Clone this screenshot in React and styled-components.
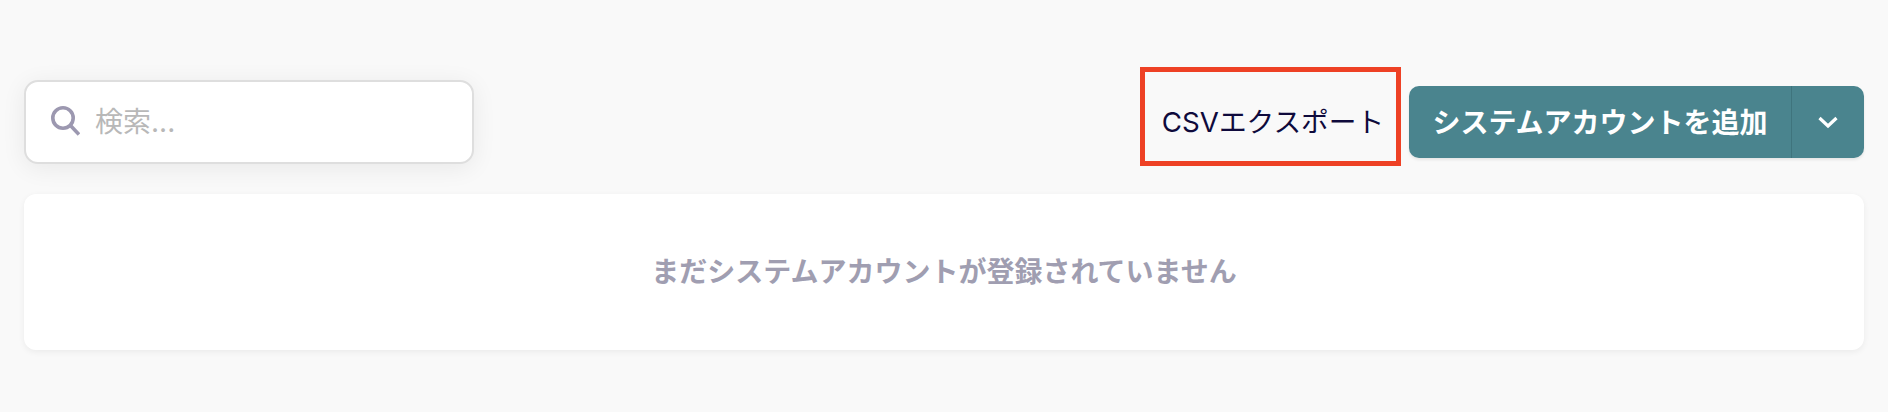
import React from "react";
import styled, { createGlobalStyle } from "styled-components";

const GlobalStyle = createGlobalStyle`
  html, body {
    margin: 0;
    padding: 0;
    background: #f9f9f9;
  }
  body {
    font-family: "Inter", "Noto Sans CJK JP", sans-serif;
  }
`;

const Page = styled.div`
  width: 1888px;
  height: 412px;
  box-sizing: border-box;
  padding: 67px 24px 0;
  background: #f9f9f9;
  overflow: hidden;
`;

const Toolbar = styled.div`
  display: flex;
  align-items: flex-end;
  height: 99px;
`;

const SearchBox = styled.label`
  display: flex;
  align-items: center;
  gap: 15px;
  width: 450px;
  height: 84px;
  margin-bottom: 2px;
  box-sizing: border-box;
  padding: 0 24px;
  background: #fff;
  border: 2px solid #dedede;
  border-radius: 14px;
  box-shadow: 0 4px 24px rgba(0, 0, 0, 0.07);

  svg {
    margin-bottom: 3px;
  }
`;

const SearchInput = styled.input`
  flex: 1;
  min-width: 0;
  border: 0;
  outline: 0;
  padding: 0;
  background: transparent;
  font-family: "Inter", "Noto Sans CJK JP", sans-serif;
  font-size: 28px;
  color: #333;

  &::placeholder {
    color: #b8b8b8;
    opacity: 1;
  }
`;

const Actions = styled.div`
  display: flex;
  align-items: flex-end;
  gap: 8px;
  margin-left: auto;
`;

const ExportLink = styled.button`
  display: flex;
  align-items: center;
  justify-content: center;
  width: 261px;
  height: 99px;
  box-sizing: border-box;
  padding: 6px 0 0 5px;
  background: transparent;
  border: 5px solid #ee4125;
  font-family: "Inter", "Noto Sans CJK JP", sans-serif;
  font-size: 27.7px;
  color: #0f0a3c;
`;

const SplitButton = styled.div`
  display: flex;
  width: 455px;
  height: 72px;
  margin-bottom: 8px;
  border-radius: 10px;
  overflow: hidden;
  background: #4a848e;
  box-shadow: 0 2px 3px rgba(0, 0, 0, 0.08);
`;

const MainButton = styled.button`
  flex: 1;
  padding: 0 0 3px;
  border: 0;
  border-right: 1px solid #3f747d;
  background: transparent;
  font-family: "Inter", "Noto Sans CJK JP", sans-serif;
  font-size: 28px;
  font-weight: 700;
  color: #fff;
`;

const CaretButton = styled.button`
  display: flex;
  align-items: center;
  justify-content: center;
  width: 72px;
  padding: 0;
  border: 0;
  background: transparent;
`;

const EmptyCard = styled.div`
  display: flex;
  align-items: center;
  justify-content: center;
  height: 156px;
  box-sizing: border-box;
  margin-top: 28px;
  padding-bottom: 4px;
  background: #fff;
  border-radius: 12px;
  box-shadow: 0 2px 6px rgba(0, 0, 0, 0.06);
  font-size: 28px;
  font-weight: 700;
  color: #a09eb1;
`;

const SearchIcon = () => (
  <svg width="30" height="30" viewBox="0 0 30 30" fill="none" stroke="#9c98b0" strokeWidth="3.6">
    <circle cx="13" cy="12" r="10.2" />
    <path d="M20.5 19.5L29 28.5" />
  </svg>
);

const ChevronIcon = () => (
  <svg width="22" height="14" viewBox="0 0 22 14" fill="none" stroke="#fff" strokeWidth="3.2">
    <path d="M2.5 3L11 11L19.5 3" />
  </svg>
);

const App = () => (
  <Page>
    <GlobalStyle />
    <Toolbar>
      <SearchBox>
        <SearchIcon />
        <SearchInput placeholder="検索..." />
      </SearchBox>
      <Actions>
        <ExportLink>CSVエクスポート</ExportLink>
        <SplitButton>
          <MainButton>システムアカウントを追加</MainButton>
          <CaretButton>
            <ChevronIcon />
          </CaretButton>
        </SplitButton>
      </Actions>
    </Toolbar>
    <EmptyCard>まだシステムアカウントが登録されていません</EmptyCard>
  </Page>
);

export default App;
